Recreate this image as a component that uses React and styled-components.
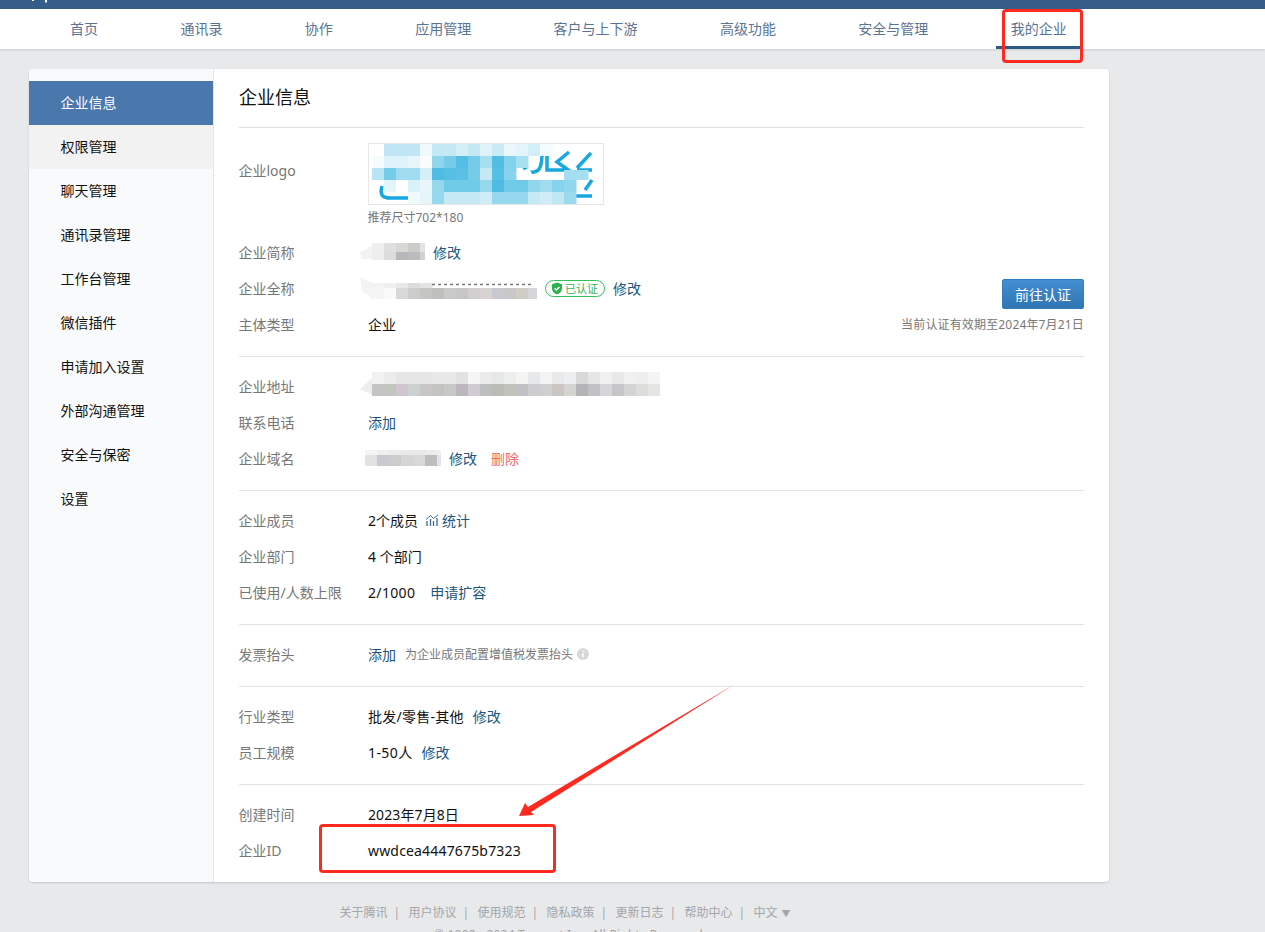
import React from 'react';
import styled, { createGlobalStyle } from 'styled-components';

const Global = createGlobalStyle`
  html, body { margin: 0; padding: 0; overflow: hidden; background: #e8e9eb; }
  body { font-family: "Noto Sans", "Noto Sans CJK SC", "Liberation Sans", sans-serif; font-size: 14px; color: #111; }
  * { box-sizing: border-box; }
`;

const Page = styled.div`
  position: relative;
  width: 1265px;
  height: 932px;
  overflow: hidden;
`;
const TopBar = styled.div`
  position: relative;
  height: 9px;
  background: #365c8a;
`;
const LogoCrumb = styled.svg`
  position: absolute;
  left: 30px;
  top: 0;
`;
const Nav = styled.nav`
  height: 40px;
  background: #fff;
  box-shadow: 0 1px 2px rgba(0, 0, 0, 0.12);
  display: flex;
  gap: 52.4px;
  padding-left: 55px;
`;
const NavItem = styled.a`
  padding: 0 15px;
  line-height: 40px;
  height: 40px;
  font-size: 14px;
  color: #5b7394;
  border-bottom: 3px solid ${p => (p.$active ? '#2f5a8a' : 'transparent')};
`;
const Content = styled.div`
  padding: 20px 0 0 29px;
`;
const Card = styled.div`
  width: 1080px;
  height: 813px;
  background: #fff;
  border-radius: 4px;
  box-shadow: 0 1px 2px rgba(0, 0, 0, 0.15);
  display: flex;
  overflow: hidden;
`;
const Side = styled.aside`
  width: 185px;
  flex: none;
  padding-top: 12px;
  background: #f9fafc;
  border-right: 1px dotted #cfd3d8;
`;
const SideItem = styled.a`
  display: block;
  height: 44px;
  line-height: 43px;
  padding-left: 31.500px;
  font-size: 14px;
  color: ${p => (p.$active ? '#fff' : '#111')};
  background: ${p => (p.$active ? '#4a78ad' : p.$hover ? '#f2f2f2' : 'transparent')};
`;
const Main = styled.main`
  flex: 1;
  padding: 0 25px;
`;
const Title = styled.h1`
  margin: 0;
  height: 59px;
  line-height: 56px;
  font-size: 18px;
  font-weight: 400;
  color: #111;
  border-bottom: 1px solid #e0e0e0;
`;
const Section = styled.section`
  padding: ${p => (p.$first ? 13 : 12)}px 0 13px;
  border-bottom: ${p => (p.$last ? 'none' : '1px solid #e4e4e6')};
`;
const Row = styled.div`
  display: flex;
  align-items: center;
  height: 36px;
`;
const LogoRow = styled.div`
  display: flex;
  height: 94px;
`;
const Label = styled.div`
  width: 129px;
  flex: none;
  color: #777;
  font-size: 14px;
  line-height: 36px;
  margin-left: -0.500px;
  padding-right: 0;
`;
const LogoLabel = styled(Label)`
  padding-top: 12px;
`;
const Value = styled.div`
  display: flex;
  align-items: center;
  gap: ${p => p.$gap ?? 8}px;
  margin-left: 0.500px;
  padding-bottom: 2px;
  color: #111;
  white-space: pre;
`;
const Nested = styled(Value)`
  margin-left: 0;
  padding-bottom: 0;
`;
const Latin = styled.span`
  letter-spacing: ${p => p.$track}px;
`;
const Link = styled.a`
  color: ${p => (p.$danger ? '#f26a6a' : '#20567f')};
`;
const LogoCol = styled.div`
  padding-top: 2px;
`;
const LogoBox = styled.div`
  width: 236px;
  height: 62px;
  border: 1px solid #e6e6e6;
`;
const Pic = styled.svg`
  display: block;
  overflow: visible;
`;
const Hint = styled.div`
  margin-top: 4px;
  font-size: 12px;
  line-height: 18px;
  color: #777;
`;
const Blur = styled.svg`
  display: block;
  flex: none;
  margin-left: -8px;
`;
const Badge = styled.span`
  display: inline-flex;
  align-items: center;
  gap: 2px;
  height: 17px;
  width: 60px;
  padding-left: 5px;
  border: 1px solid #2fc05a;
  border-radius: 9px;
  color: #2fb653;
  font-size: 11px;
`;
const VerifyButton = styled.button`
  width: 82px;
  height: 30px;
  margin: 10px 0 0 auto;
  padding: 0;
  border: 1px solid #2f7dbf;
  border-radius: 2px;
  background: linear-gradient(#438ed2, #2f76b2);
  color: #fff;
  font: 14px "Noto Sans", "Noto Sans CJK SC", sans-serif;
`;
const Expiry = styled.div`
  margin-left: auto;
  padding-bottom: 2px;
  font-size: 12px;
  letter-spacing: 0.160px;
  color: #777;
`;
const Note = styled.span`
  font-size: 12px;
  color: #777;
`;
const NoteGroup = styled.span`
  display: inline-flex;
  align-items: center;
  gap: ${p => p.$gap ?? 4}px;
`;
const Footer = styled.footer`
  width: 1080px;
  padding-top: 21px;
  text-align: center;
  font-size: 12px;
  color: #a3a6aa;
`;
const FooterLinks = styled.div`
  display: flex;
  justify-content: center;
  line-height: 20px;
  padding-right: 8px;
`;
const FooterSep = styled.span`
  margin: 0 8.400px 0 6px;
`;
const Caret = styled.span`
  font-size: 9px;
  margin-left: 4px;
`;
const Copyright = styled.div`
  margin-top: 2px;
  letter-spacing: 0.200px;
  padding-right: 1px;
`;
const Mark = styled.div`
  position: absolute;
  border: 3px solid #ff2a1f;
  border-radius: 4px;
  left: ${p => p.$x}px;
  top: ${p => p.$y}px;
  width: ${p => p.$w}px;
  height: ${p => p.$h}px;
`;
const Arrow = styled.svg`
  position: absolute;
  left: 0;
  top: 0;
`;

const cells = (rows) =>
  rows.flatMap(([x, y, h, colors]) =>
    colors.map((c, i) => <rect key={`${x}-${y}-${i}`} x={x + i * 12} y={y} width="12.500" height={h} fill={c} />)
  );

const Mosaic = ({ w, h, rows, children }) => (
  <Blur width={w} height={h} viewBox={`0 0 ${w} ${h}`}>
    {cells(rows)}
    {children}
  </Blur>
);

const logoRows = [
  [15, 0, 12, ['#c0e5f4', '#c0e5f4', '#c0e5f4', '#f0f9fc', '#c5e8f5', '#c5e8f5', '#d5eff7', '#c5e8f5', '#dff2f9', '#c9ebf6', '#ecf7fb', '#e3f4fa', '#d2eef8', '#f4fbfd']],
  [3, 12, 12, ['#f5fbfd', '#def2f9', '#def2f9', '#e8f6fb', '#fafdfe', '#8fd5ec', '#75cce8', '#53bde3', '#75cbe7', '#a8dff0', '#52bde2', '#83d1ea', '#a8e0f1']],
  [3, 24, 12, ['#b8e5f3', '#75cce8', '#a0dcef', '#a0dcef', '#d5eff7', '#4fbce3', '#55bfe4', '#5cc0e4', '#75cce9', '#c5e8f3', '#55bfe4', '#88d3eb']],
  [195, 26, 10, ['#a5def0', '#a5def0']],
  [15, 36, 12, ['#e4f5fa', '#ffffff', '#d9f1f8', '#e8f6fb', '#95d8ee', '#70cbe8', '#70cbe8', '#70cbe8', '#95d8ee', '#4ebce2', '#70cbe8', '#70cbe8', '#90d6ed', '#a0dbef', '#85d3ec', '#90d6ed']],
  [39, 48, 12, ['#f0f9fc', '#e5f5fa', '#96d8ee', '#c5e9f5', '#c5e9f5', '#c5e9f5', '#d0ecf6', '#95d8ee', '#95d8ee', '#95d8ee', '#c5e9f5', '#d0ecf7', '#bfe7f4', '#9adaef']],
];

const nameRows = [
  [12, 0, 9, ['#eeeeee', '#dfdfdf', '#d8d8d6', '#cfccc8', '#e4e4e4']],
  [12, 9, 8, ['#f0eeec', '#dcdcda', '#b8b8ba', '#bcbbbd', '#d0d0d0']],
];
const fullRows = [
  [12, 6, 5, ['#f3f3f3', '#f0f0f0', '#e8e8e8', '#dcdcdc', '#e4e4e4']],
  [12, 11, 11, ['#f5f5f5', '#f9f9f9', '#d8d8d8', '#cccccc', '#c5c5c3', '#bfc0be', '#cacaca', '#c8c5c8', '#d2ced0', '#d8d2d2', '#c8c8d0', '#c8c8c8', '#d0cdc5', '#d5d5da', '#dcdcdc']],
];
const addrRows = [
  [12, 0, 12, ['#f2f2f2', '#ececec', '#e6e6e6', '#e6e6e6', '#e6e6e6', '#e8e8e8', '#e8e8e8', '#e2e2e2', '#f5f5f5', '#ebebeb', '#e6e8e8', '#eceeee', '#f4f4f2', '#e6e8ea', '#f3f3f3', '#e9e9e9', '#eceef0', '#d8d8d8', '#e6e6e6', '#f0f0f0', '#e8e8e8', '#f0f0f0', '#eeeeee', '#f4f4f4']],
  [12, 12, 12, ['#c4c4c4', '#c2c4c0', '#cfc5ce', '#ccd0d0', '#c8c6c6', '#c2c4c2', '#c8c8c8', '#bdb7bd', '#cfcbd3', '#bcbfbf', '#bcbcb6', '#c2c2ba', '#bfbfc4', '#cdcdd0', '#cfcfcf', '#cbc5c3', '#d4d4d0', '#b4b4b6', '#c2c2c4', '#d6d6da', '#c6c6c8', '#d4d4d4', '#dcdedc', '#e4e4e2']],
];
const domainRows = [
  [5, 2, 5, ['#f4f4f4', '#f0f0f0', '#ececec', '#e8e8e8', '#e8e8e8', '#ececec', '#f0f0f4']],
  [5, 7, 11, ['#e2e2e2', '#c9c9d2', '#ccccca', '#d5d5d5', '#d8d8d8', '#bebebe', '#e2e2ea']],
];

const navItems = ['首页', '通讯录', '协作', '应用管理', '客户与上下游', '高级功能', '安全与管理', '我的企业'];
const sideItems = ['企业信息', '权限管理', '聊天管理', '通讯录管理', '工作台管理', '微信插件', '申请加入设置', '外部沟通管理', '安全与保密', '设置'];
const footerItems = ['关于腾讯', '用户协议', '使用规范', '隐私政策', '更新日志', '帮助中心'];

const ShieldIcon = () => (
  <svg width="12" height="13" viewBox="0 0 12 13">
    <path d="M6 .5 11 2.200v4.200c0 3-2.200 5-5 6.100C3.200 11.400 1 9.400 1 6.400V2.200z" fill="#2bb24c" />
    <path d="M3.700 6.300 5.400 8l3-3.100" fill="none" stroke="#fff" strokeWidth="1.500" />
  </svg>
);
const StatIcon = () => (
  <svg width="14" height="13" viewBox="0 0 14 13" fill="none" stroke="#3d6b8f" strokeWidth="1.300">
    <path d="M2 12V7M5.500 12V5M8.500 12V7M12 12V4" />
    <path d="M1 5.500 5.500 1.500l3 3L13 1" strokeWidth="1" />
  </svg>
);
const InfoIcon = () => (
  <svg width="12" height="12" viewBox="0 0 12 12">
    <circle cx="6" cy="6" r="6" fill="#d8d8d8" />
    <path d="M6.500 2.500v1.300M6.100 5.200 5.600 9.300" stroke="#fff" strokeWidth="1.500" />
  </svg>
);

export default function App() {
  return (
    <Page>
      <Global />
      <TopBar>
        <LogoCrumb width="20" height="4" viewBox="0 0 20 4">
          <path d="M2 0h2v1H2zM15 0h2v2.500h-2z" fill="#fff" />
        </LogoCrumb>
      </TopBar>
      <Nav>
        {navItems.map((n, i) => (
          <NavItem key={n} $active={i === navItems.length - 1}>{n}</NavItem>
        ))}
      </Nav>
      <Content>
        <Card>
          <Side>
            {sideItems.map((n, i) => (
              <SideItem key={n} $active={i === 0} $hover={i === 1}>{n}</SideItem>
            ))}
          </Side>
          <Main>
            <Title>企业信息</Title>
            <Section $first>
              <LogoRow>
                <LogoLabel>企业logo</LogoLabel>
                <LogoCol>
                  <LogoBox>
                    <Pic width="234" height="60" viewBox="0 0 234 60">
                      <g fill="none" stroke="#16a8df" strokeWidth="3.500">
                        <path d="M153 18c2 9 8 11 12 10 6-1 8-6 8-20" />
                        <path d="M178 8v18h22M200 8l-12 10 14 10" />
                        <path d="M222 9 208 24M208 26h15M223 36l-7 10M200 52h23" />
                        <path d="M13 42c-3 10 2 12 8 12h30" />
                      </g>
                      {cells(logoRows)}
                      <path d="M146 30l14-6 4 8zM3 12l-3 10 3 6z" fill="#fff" />
                    </Pic>
                  </LogoBox>
                  <Hint>推荐尺寸702*180</Hint>
                </LogoCol>
              </LogoRow>
              <Row>
                <Label>企业简称</Label>
                <Value>
                  <Mosaic w={65} h={18} rows={nameRows}>
                    <path d="M0 9 12 3v13H2z" fill="#f3f3f3" />
                  </Mosaic>
                  <Link>修改</Link>
                </Value>
              </Row>
              <Row>
                <Label>企业全称</Label>
                <Value>
                  <Mosaic w={177} h={23} rows={fullRows}>
                    <path d="M0 0 12 6v16L2 14z" fill="#f4f4f4" />
                    <path d="M72 7.500h100" stroke="#777" strokeWidth="1.500" strokeDasharray="3 3" />
                  </Mosaic>
                  <Badge><ShieldIcon />已认证</Badge>
                  <Link>修改</Link>
                </Value>
                <VerifyButton>前往认证</VerifyButton>
              </Row>
              <Row>
                <Label>主体类型</Label>
                <Value>企业</Value>
                <Expiry>当前认证有效期至2024年7月21日</Expiry>
              </Row>
            </Section>
            <Section>
              <Row>
                <Label>企业地址</Label>
                <Value>
                  <Mosaic w={300} h={28} rows={addrRows}>
                    <path d="M0 17 12 6v17z" fill="#eeeeee" />
                  </Mosaic>
                </Value>
              </Row>
              <Row>
                <Label>联系电话</Label>
                <Value><Link>添加</Link></Value>
              </Row>
              <Row>
                <Label>企业域名</Label>
                <Value $gap={14}>
                  <Nested>
                    <Mosaic w={81} h={20} rows={domainRows} />
                    <Link>修改</Link>
                  </Nested>
                  <Link $danger>删除</Link>
                </Value>
              </Row>
            </Section>
            <Section>
              <Row>
                <Label>企业成员</Label>
                <Value $gap={7}>
                  2个成员
                  <NoteGroup $gap={3}><StatIcon /><Link>统计</Link></NoteGroup>
                </Value>
              </Row>
              <Row>
                <Label>企业部门</Label>
                <Value>4 个部门</Value>
              </Row>
              <Row>
                <Label>已使用/人数上限</Label>
                <Value $gap={15}><Latin $track={0.330}>2/1000</Latin><Link>申请扩容</Link></Value>
              </Row>
            </Section>
            <Section>
              <Row>
                <Label>发票抬头</Label>
                <Value $gap={9}>
                  <Link>添加</Link>
                  <NoteGroup><Note>为企业成员配置增值税发票抬头</Note><InfoIcon /></NoteGroup>
                </Value>
              </Row>
            </Section>
            <Section>
              <Row>
                <Label>行业类型</Label>
                <Value $gap={9}><Latin $track={0.250}>批发/零售-其他</Latin><Link>修改</Link></Value>
              </Row>
              <Row>
                <Label>员工规模</Label>
                <Value $gap={9}><Latin $track={0.400}>1-50人</Latin><Link>修改</Link></Value>
              </Row>
            </Section>
            <Section $last>
              <Row>
                <Label>创建时间</Label>
                <Value><Latin $track={0.100}>2023年7月8日</Latin></Value>
              </Row>
              <Row>
                <Label>企业ID</Label>
                <Value><Latin $track={0.170}>wwdcea4447675b7323</Latin></Value>
              </Row>
            </Section>
          </Main>
        </Card>
        <Footer>
          <FooterLinks>
            {footerItems.map(n => (
              <React.Fragment key={n}>
                <span>{n}</span>
                <FooterSep>|</FooterSep>
              </React.Fragment>
            ))}
            <span>中文<Caret>▼</Caret></span>
          </FooterLinks>
          <Copyright>© 1998 - 2024 Tencent Inc. All Rights Reserved</Copyright>
        </Footer>
      </Content>
      <Mark $x={1002} $y={9} $w={81} $h={54} />
      <Mark $x={319} $y={824} $w={237} $h={49} />
      <Arrow width="1265" height="932" viewBox="0 0 1265 932">
        <polygon points="735,684 528,807 525,803 519,816 534,815 531,812" fill="#ff2a1f" />
      </Arrow>
    </Page>
  );
}
